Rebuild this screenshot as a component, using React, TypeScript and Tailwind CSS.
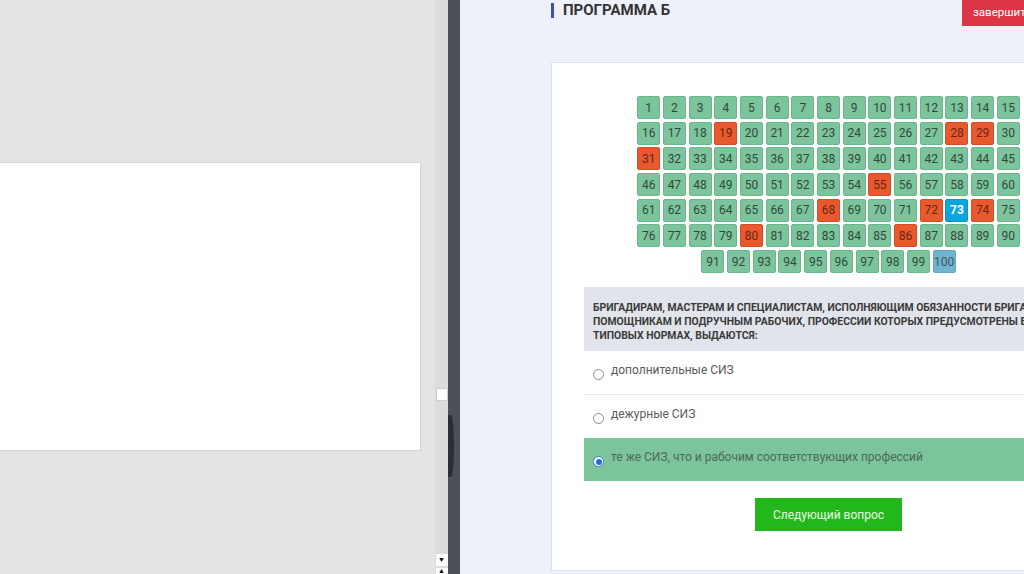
import React from "react";

const wrong = [19, 28, 29, 31, 55, 68, 72, 74, 80, 86];

const cellClass = (n: number) => {
  if (n === 73) return "bg-[#0aa6dd] border-[#0995c7] text-white font-bold";
  if (n === 100) return "bg-[#71b4cf] border-[#62a6c2] text-[#3b5561]";
  if (wrong.includes(n)) return "bg-[#e85a2e] border-[#d54d24] text-[#6b2410]";
  return "bg-[#7cc49c] border-[#6cb68c] text-[#33483c]";
};

const Cell = ({ n }: { n: number }) => (
  <div
    className={`w-[23px] h-[23px] rounded-[2px] border flex items-center justify-center text-[12px] leading-none ${cellClass(n)}`}
  >
    {n}
  </div>
);

const Radio = ({ checked }: { checked?: boolean }) => (
  <span
    className={`w-[11px] h-[11px] rounded-full border flex items-center justify-center shrink-0 mt-[4px] bg-white ${
      checked ? "border-[#3b7be0]" : "border-[#8a8a8a]"
    }`}
  >
    {checked && <span className="w-[6px] h-[6px] rounded-full bg-[#1a6fdc]" />}
  </span>
);

const App = () => {
  const nums = Array.from({ length: 100 }, (_, i) => i + 1);

  return (
    <div className="flex w-[1024px] h-[574px] overflow-hidden font-['Roboto',sans-serif]">
      {/* left window */}
      <div className="w-[435px] bg-[#e4e4e4] shrink-0">
        <div className="mt-[162px] w-[421px] h-[289px] bg-white border border-l-0 border-[#d4d4d4]" />
      </div>

      {/* scrollbar */}
      <div className="w-[13px] bg-[#dcdcdc] shrink-0 flex flex-col items-center">
        <div className="mt-[388px] w-[12px] h-[13px] bg-white border border-[#cfcfcf]" />
        <div className="mt-auto w-[12px] h-[12px] bg-white flex items-center justify-center text-[7px] leading-none text-black">
          ▼
        </div>
        <div className="mt-[2px] w-[12px] h-[6px] bg-white flex items-start justify-center text-[7px] leading-none text-black overflow-hidden">
          ▲
        </div>
      </div>

      {/* dark strip */}
      <div className="relative w-[12px] bg-[#4d5059] shrink-0">
        <div className="absolute left-0 top-[415px] w-[6px] h-[62px] rounded-r-[100%] bg-[#2c2e34]" />
      </div>

      {/* test panel */}
      <div className="flex-1 bg-[#eef1f9] overflow-hidden">
        <div className="pl-[91px] w-[700px]">
          {/* header */}
          <div className="flex h-[26px]">
            <div className="w-[411px] flex items-start pt-[3px]">
              <span className="w-[3px] h-[15px] bg-[#3f51b5]" />
              <span className="ml-[9px] text-[15px] leading-[15px] font-bold text-[#333]">
                ПРОГРАММА Б
              </span>
            </div>
            <button className="h-[26px] px-[11px] bg-[#dc3545] text-white text-[11.5px] whitespace-nowrap">
              завершить тест
            </button>
          </div>

          {/* card */}
          <div className="mt-[36px] w-[555px] bg-white border border-[#dde1e8] pt-[33px] pb-[39px]">
            <div className="flex flex-wrap justify-center gap-[2.7px] w-[383px] mx-auto">
              {nums.map((n) => (
                <Cell key={n} n={n} />
              ))}
            </div>

            <div className="px-[32px] mt-[14px]">
              <div className="bg-[#e2e4eb] pl-[9px] pt-[14px] pb-[8px] text-[10.4px] leading-[14px] font-bold text-[#3a3a3a] whitespace-nowrap">
                БРИГАДИРАМ, МАСТЕРАМ И СПЕЦИАЛИСТАМ, ИСПОЛНЯЮЩИМ ОБЯЗАННОСТИ БРИГАДИРОВ,
                <br />
                ПОМОЩНИКАМ И ПОДРУЧНЫМ РАБОЧИХ, ПРОФЕССИИ КОТОРЫХ ПРЕДУСМОТРЕНЫ В
                <br />
                ТИПОВЫХ НОРМАХ, ВЫДАЮТСЯ:
              </div>

              <div className="h-[44px] flex items-center gap-[7px] pl-[9px] border-b border-[#e6e6e6]">
                <Radio />
                <span className="text-[12px] text-[#5a5a5a] pb-[5px]">дополнительные СИЗ</span>
              </div>
              <div className="h-[43px] flex items-center gap-[7px] pl-[9px]">
                <Radio />
                <span className="text-[12px] text-[#5a5a5a] pb-[5px]">дежурные СИЗ</span>
              </div>
              <div className="h-[43px] flex items-center gap-[7px] pl-[9px] bg-[#7cc49c]">
                <Radio checked />
                <span className="text-[12px] text-[#4b6a58] pb-[5px]">
                  те же СИЗ, что и рабочим соответствующих профессий
                </span>
              </div>

              <div className="flex justify-center mt-[17px]">
                <button className="w-[147px] h-[33px] bg-[#22b81c] text-[#e8fbe4] text-[12px]">
                  Следующий вопрос
                </button>
              </div>
            </div>
          </div>
        </div>
      </div>
    </div>
  );
};

export default App;
